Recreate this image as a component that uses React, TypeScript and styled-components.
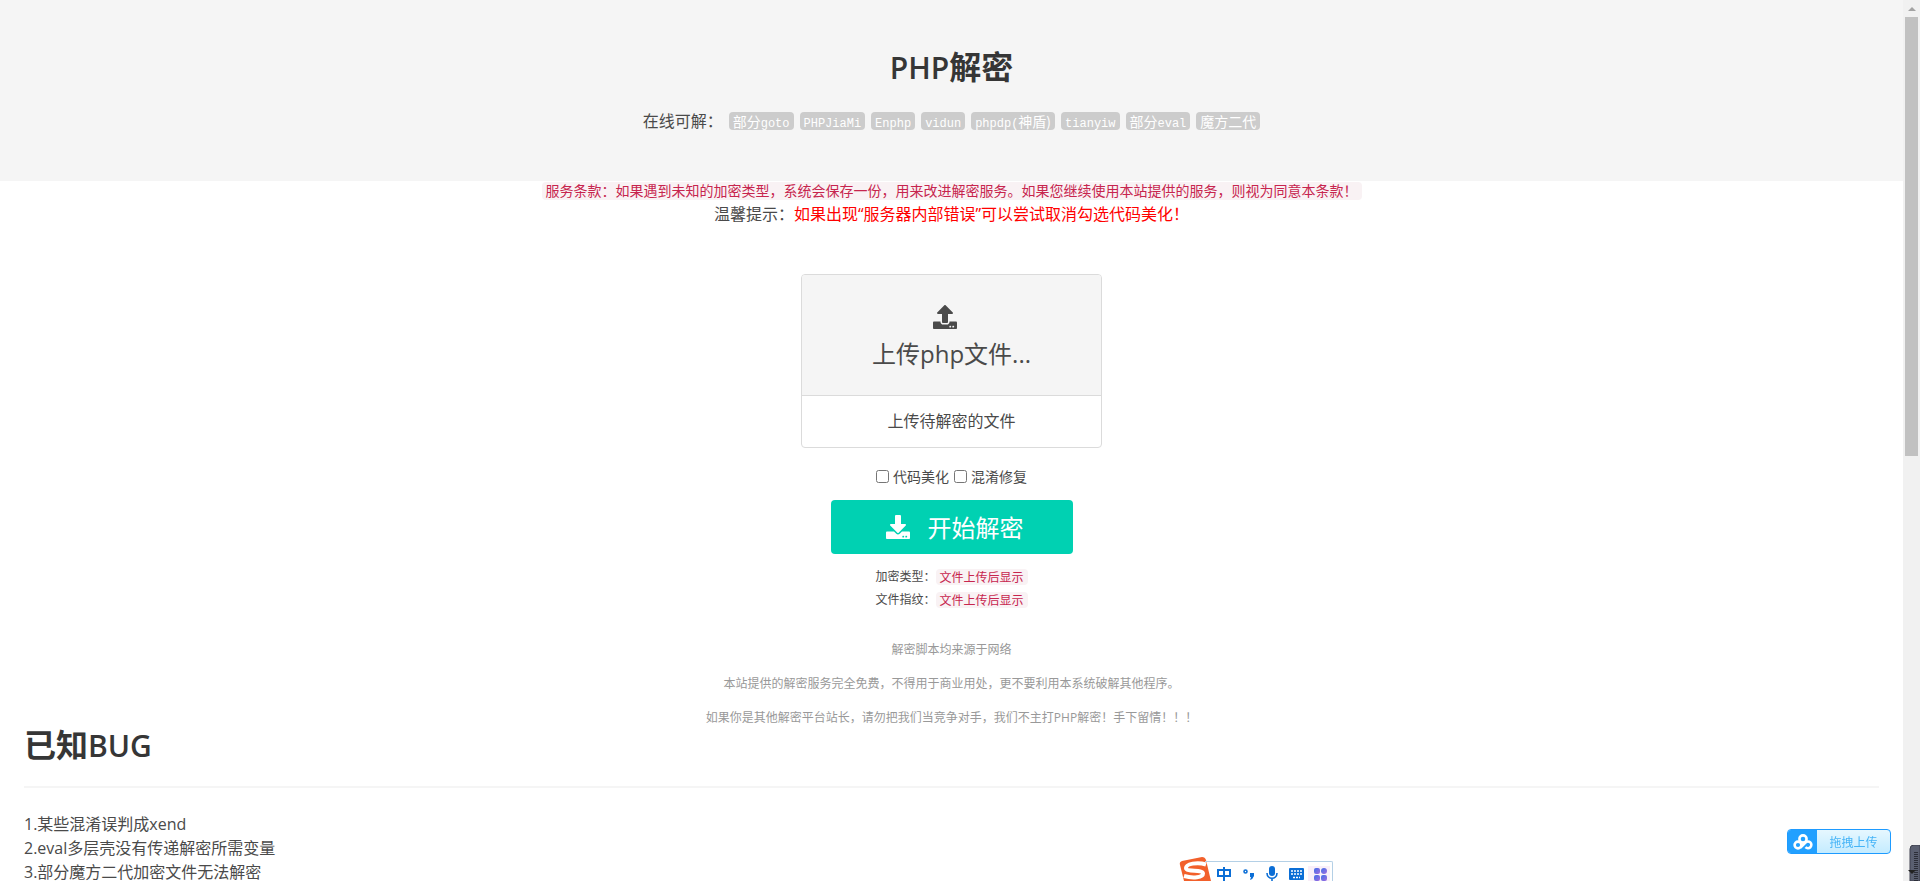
import React from "react";
import styled, { createGlobalStyle } from "styled-components";
import { FaDownload, FaUpload } from "react-icons/fa";

const GlobalStyle = createGlobalStyle`
  *, *::before, *::after { box-sizing: border-box; }
  body {
    margin: 0;
    background: #fff;
    color: #4a4a4a;
    font: 400 16px/24px "Open Sans", "Noto Sans CJK SC", sans-serif;
  }
  h1, h2, p { margin: 0; }
  svg { display: block; }
`;

const Page = styled.div`
  display: flex;
  height: 100vh;
  overflow: hidden;
`;

const Main = styled.main`
  flex: 1;
  min-width: 0;
`;

const Hero = styled.header`
  display: flex;
  flex-direction: column;
  align-items: center;
  gap: 23px;
  padding: 49px 24px 47px;
  background: #f5f5f5;
`;

const Title = styled.h1`
  color: #363636;
  font-size: 32px;
  font-weight: 700;
  line-height: 36px;
`;

const TitleLatin = styled.span`
  font-size: 30px;
  font-weight: 600;
  line-height: 30px;
`;

const Kinds = styled.div`
  display: flex;
  align-items: center;
  justify-content: center;
  flex-wrap: wrap;
  gap: 6px;
  line-height: 26px;
`;

const Tag = styled.span`
  height: 18px;
  padding: 0 4px;
  border-radius: 4px;
  background: #ccc;
  color: #fff;
  font: 400 14px/18px "Noto Sans CJK SC", sans-serif;
`;

const Mono = styled.span`
  font: 12px/12px "Liberation Mono", monospace;
`;

const Notice = styled.p`
  display: flex;
  justify-content: center;
  line-height: 26px;
`;

const Warning = styled.span`
  color: #f00;
`;

const Code = styled.code<{ $small?: boolean }>`
  padding: 0 4px ${(p) => (p.$small ? 0 : 2)}px;
  border-radius: 4px;
  background: #f9f2f4;
  color: #c7254e;
  font-family: "Noto Sans CJK SC", sans-serif;
  font-size: ${(p) => (p.$small ? 12 : 14)}px;
  line-height: 16px;
`;

const Terms = styled.p`
  display: flex;
  justify-content: center;
  padding: 1px 0;
`;

const Form = styled.form`
  display: flex;
  flex-direction: column;
  align-items: center;
  padding-top: 47px;
`;

const Upload = styled.label`
  display: block;
  width: 301px;
  border: 1px solid #dbdbdb;
  border-radius: 4px;
  overflow: hidden;
  text-align: center;
  cursor: pointer;
`;

const FileInput = styled.input`
  display: none;
`;

const UploadCta = styled.span`
  display: flex;
  flex-direction: column;
  align-items: center;
  gap: 6px;
  padding: 30px 24px 22px;
  background: #f5f5f5;
  font-size: 24px;
  line-height: 38px;

  svg { margin-right: 14px; }
`;

const UploadName = styled.span`
  display: block;
  border-top: 1px solid #dbdbdb;
  line-height: 51px;
`;

const Options = styled.div`
  display: flex;
  gap: 5px;
  padding: 17px 0 11px;
  font-size: 14px;
`;

const Option = styled.label`
  display: flex;
  align-items: center;
  gap: 4px;
`;

const Checkbox = styled.input`
  width: 13px;
  height: 13px;
  margin: 0 0 2px;
`;

const Submit = styled.button`
  display: flex;
  align-items: center;
  justify-content: center;
  gap: 18px;
  width: 242px;
  height: 54px;
  padding: 0 0 0 6px;
  border: 0;
  border-radius: 4px;
  background: #00d1b2;
  color: #fff;
  font: inherit;
  font-size: 24px;
  cursor: pointer;
`;

const SubmitText = styled.span`
  padding-top: 2px;
`;

const Results = styled.dl`
  margin: 11px 0 0;
  font-size: 12px;
`;

const Result = styled.div`
  display: flex;
  align-items: center;
  line-height: 23px;

  dd { display: flex; margin: 0; }
`;

const Disclaimer = styled.footer`
  display: flex;
  flex-direction: column;
  gap: 16px;
  padding-top: 30px;
  color: #999;
  font-size: 12px;
  line-height: 18px;
  text-align: center;
`;

const Bugs = styled.section`
  padding: 0 24px;
`;

const Rule = styled.hr`
  height: 2px;
  margin: 23px 0 24px;
  border: 0;
  background: #f5f5f5;
`;

const ScrollTrack = styled.div`
  display: flex;
  flex-direction: column;
  align-items: center;
  width: 17px;
  background: #f1f1f1;
`;

const ScrollArrow = styled.span`
  height: 17px;
  padding-top: 7px;

  &::before {
    content: "";
    display: block;
    border: 4px solid transparent;
    border-top: 0;
    border-bottom-color: #a3a3a3;
  }
`;

const ScrollThumb = styled.span`
  width: 13px;
  height: calc(50% - 2px);
  background: #c1c1c1;
`;

const DropUpload = styled.button`
  position: fixed;
  right: 29px;
  bottom: 27px;
  display: flex;
  width: 104px;
  height: 25px;
  padding: 0;
  border: 1px solid #1e9bff;
  border-radius: 4px;
  overflow: hidden;
  background: linear-gradient(#e6f7ff, #c4ecff);
  color: #45b4f7;
  font: 12px/23px "Noto Sans CJK SC", sans-serif;
`;

const DropIcon = styled.span`
  display: flex;
  align-items: center;
  justify-content: center;
  width: 29px;
  height: 23px;
  background: #22a0ff;
`;

const DropText = styled.span`
  flex: 1;
`;

const Ime = styled.div`
  position: fixed;
  left: 1179px;
  bottom: 0;
  display: flex;
  align-items: flex-end;
`;

const ImeBar = styled.div`
  display: flex;
  align-items: center;
  width: 128px;
  height: 20px;
  margin-left: -6px;
  border: 1px solid #b4d0e6;
  border-width: 1px 1px 0 0;
  border-radius: 0 2px 0 0;
`;

const SideTab = styled.div`
  position: fixed;
  right: 0;
  bottom: 0;
`;

const kinds: [string, string, string][] = [
  ["部分", "goto", ""],
  ["", "PHPJiaMi", ""],
  ["", "Enphp", ""],
  ["", "vidun", ""],
  ["", "phpdp(", "神盾)"],
  ["", "tianyiw", ""],
  ["部分", "eval", ""],
  ["魔方二代", "", ""],
];

const bugs = [
  "1.某些混淆误判成xend",
  "2.eval多层壳没有传递解密所需变量",
  "3.部分魔方二代加密文件无法解密",
];

const SogouLogo = () => (
  <svg width="32" height="24" viewBox="0 0 32 24" aria-hidden="true">
    <path d="M1 8Q0 5 3 4L23 0Q26 0 27 3L32 24H5Z" fill="#f2602b" />
    <path
      d="M27 7.500C18 4.500 7 7 7 11C7 15.500 24 12 24 16.500C24 20.500 14 21.500 5 19"
      fill="none"
      stroke="#fff"
      strokeWidth="4"
    />
  </svg>
);

const ImeIcons = () => (
  <svg width="127" height="19" viewBox="1205 862 127 19" aria-hidden="true">
    <defs>
      <linearGradient id="ime-grid" x1="0" x2="1" y1="0" y2="1">
        <stop offset="0" stopColor="#3f6fe8" />
        <stop offset="1" stopColor="#a06be0" />
      </linearGradient>
    </defs>
    <g fill="none" stroke="#0b6ed6" strokeWidth="2">
      <path d="M1218 870H1230V876H1218ZM1224 867V881" />
      <circle cx="1245.500" cy="871.500" r="1.500" strokeWidth="1.600" />
      <path d="M1267 873C1267 880 1277 880 1277 873M1272 878V881" strokeWidth="1.600" />
    </g>
    <g fill="#0b6ed6">
      <path d="M1250 873H1254V876Q1253 879 1250 880L1251 877H1250Z" />
      <rect x="1269" y="866" width="6" height="10" rx="3" />
      <rect x="1289" y="868" width="15" height="12" rx="1" />
    </g>
    <path
      d="M1291 871H1302M1291 874H1302M1293 877.500H1300"
      stroke="#fff"
      strokeWidth="1.500"
      strokeDasharray="2 1"
    />
    <rect x="1308" y="866" width="22" height="15" fill="#f9eff9" />
    <g fill="url(#ime-grid)">
      <rect x="1314" y="868" width="6" height="6" rx="2" />
      <rect x="1321" y="868" width="6" height="6" rx="3" />
      <rect x="1314" y="875" width="6" height="6" rx="2" />
      <rect x="1321" y="875" width="6" height="6" rx="2" />
    </g>
  </svg>
);

const CloudLogo = () => (
  <svg width="20" height="16" viewBox="0 0 20 16" aria-hidden="true">
    <g fill="none" stroke="#fff" strokeWidth="2.600">
      <circle cx="10" cy="5" r="3.600" />
      <circle cx="5" cy="11" r="3.400" />
      <path d="M12.500 8.500A3.400 3.400 0 1 1 12.500 13.200M7.500 13.500L13 8" />
    </g>
  </svg>
);

export default function App() {
  return (
    <Page>
      <GlobalStyle />
      <Main>
        <Hero>
          <Title>
            <TitleLatin>PHP</TitleLatin>解密
          </Title>
          <Kinds>
            <span>在线可解：</span>
            {kinds.map(([before, latin, after]) => (
              <Tag key={before + latin}>
                {before}
                {latin && <Mono>{latin}</Mono>}
                {after}
              </Tag>
            ))}
          </Kinds>
        </Hero>

        <Terms>
          <Code>
            服务条款：如果遇到未知的加密类型，系统会保存一份，用来改进解密服务。如果您继续使用本站提供的服务，则视为同意本条款！
          </Code>
        </Terms>
        <Notice>
          温馨提示：
          <Warning>如果出现“服务器内部错误”可以尝试取消勾选代码美化！</Warning>
        </Notice>

        <Form onSubmit={(e) => e.preventDefault()}>
          <Upload>
            <FileInput type="file" accept=".php" />
            <UploadCta>
              <FaUpload size={24} />
              上传php文件...
            </UploadCta>
            <UploadName>上传待解密的文件</UploadName>
          </Upload>
          <Options>
            <Option>
              <Checkbox type="checkbox" />
              代码美化
            </Option>
            <Option>
              <Checkbox type="checkbox" />
              混淆修复
            </Option>
          </Options>
          <Submit type="submit">
            <FaDownload size={24} />
            <SubmitText>开始解密</SubmitText>
          </Submit>
          <Results>
            <Result>
              <dt>加密类型：</dt>
              <dd>
                <Code $small>文件上传后显示</Code>
              </dd>
            </Result>
            <Result>
              <dt>文件指纹：</dt>
              <dd>
                <Code $small>文件上传后显示</Code>
              </dd>
            </Result>
          </Results>
        </Form>

        <Disclaimer>
          <p>解密脚本均来源于网络</p>
          <p>本站提供的解密服务完全免费，不得用于商业用处，更不要利用本系统破解其他程序。</p>
          <p>如果你是其他解密平台站长，请勿把我们当竞争对手，我们不主打PHP解密！手下留情！！！</p>
        </Disclaimer>

        <Bugs>
          <Title as="h2">
            已知<TitleLatin>BUG</TitleLatin>
          </Title>
          <Rule />
          {bugs.map((bug) => (
            <p key={bug}>{bug}</p>
          ))}
        </Bugs>
      </Main>

      <ScrollTrack aria-hidden="true">
        <ScrollArrow />
        <ScrollThumb />
      </ScrollTrack>

      <DropUpload type="button">
        <DropIcon>
          <CloudLogo />
        </DropIcon>
        <DropText>拖拽上传</DropText>
      </DropUpload>

      <Ime>
        <SogouLogo />
        <ImeBar>
          <ImeIcons />
        </ImeBar>
      </Ime>

      <SideTab>
        <svg width="12" height="36" viewBox="0 0 12 36" aria-hidden="true">
          <path d="M2 36V4Q2 0 6 0H12V36Z" fill="#5a5f70" stroke="#3c3f4c" />
          <path d="M8 7V36" stroke="#2c2e38" strokeWidth="4" strokeDasharray="1 1" />
          <path d="M0 25H8L4 29Z" fill="#222" />
        </svg>
      </SideTab>
    </Page>
  );
}
